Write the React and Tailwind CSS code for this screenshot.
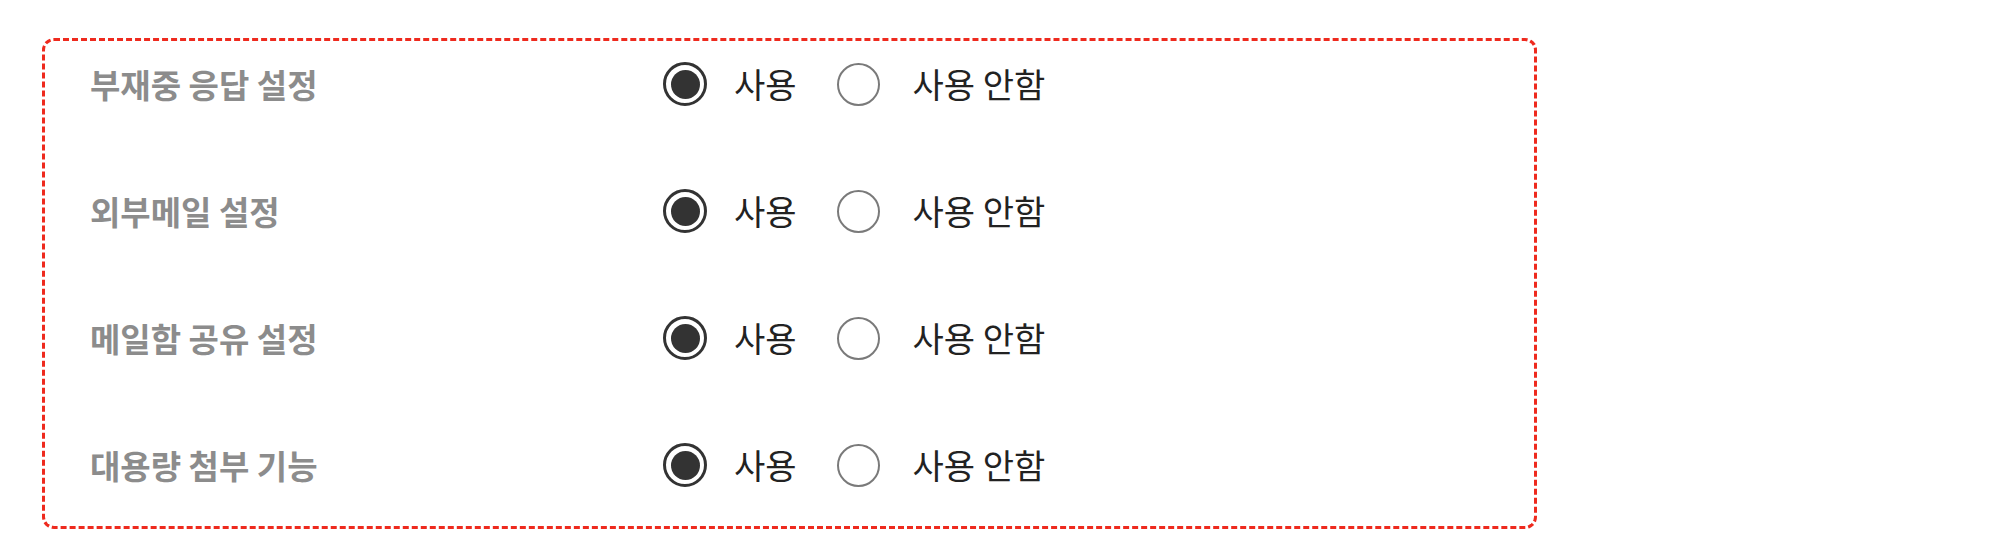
import { useState } from "react";

const settings = [
  { id: "autoReply", label: "부재중 응답 설정" },
  { id: "externalMail", label: "외부메일 설정" },
  { id: "shareMailbox", label: "메일함 공유 설정" },
  { id: "largeAttach", label: "대용량 첨부 기능" },
];

function Radio({ checked, label, onClick, wide }) {
  return (
    <button
      type="button"
      onClick={onClick}
      className={wide ? "flex items-center gap-[33px]" : "flex items-center gap-[27px]"}
    >
      {checked ? (
        <span className="flex h-[44px] w-[44px] items-center justify-center rounded-full border-[3px] border-[#333]">
          <span className="h-[29px] w-[29px] rounded-full bg-[#333]" />
        </span>
      ) : (
        <span className="h-[43px] w-[43px] rounded-full border-2 border-[#7a7a7a]" />
      )}
      <span className="text-[34px] leading-none text-[#222]">{label}</span>
    </button>
  );
}

export default function App() {
  const [values, setValues] = useState({
    autoReply: true,
    externalMail: true,
    shareMailbox: true,
    largeAttach: true,
  });

  return (
    <div
      className="min-h-screen bg-white pl-[42px] pt-[38px]"
      style={{ fontFamily: '"Noto Sans CJK KR", "Noto Sans", sans-serif' }}
    >
      {/* settings box */}
      <div className="flex w-[1495px] flex-col gap-[83px] rounded-[12px] border-[3px] border-dashed border-[#ee2a1e] pb-[39px] pl-[45px] pt-[21px]">
        {settings.map((s) => (
          <div key={s.id} className="flex h-[44px] items-center">
            <div className="w-[573px] text-[33px] font-semibold leading-none text-[#8c8c8c]">
              {s.label}
            </div>
            <div className="flex items-center gap-[40px]">
              <Radio
                checked={values[s.id]}
                label="사용"
                onClick={() => setValues({ ...values, [s.id]: true })}
              />
              <Radio
                wide
                checked={!values[s.id]}
                label="사용 안함"
                onClick={() => setValues({ ...values, [s.id]: false })}
              />
            </div>
          </div>
        ))}
      </div>
    </div>
  );
}
